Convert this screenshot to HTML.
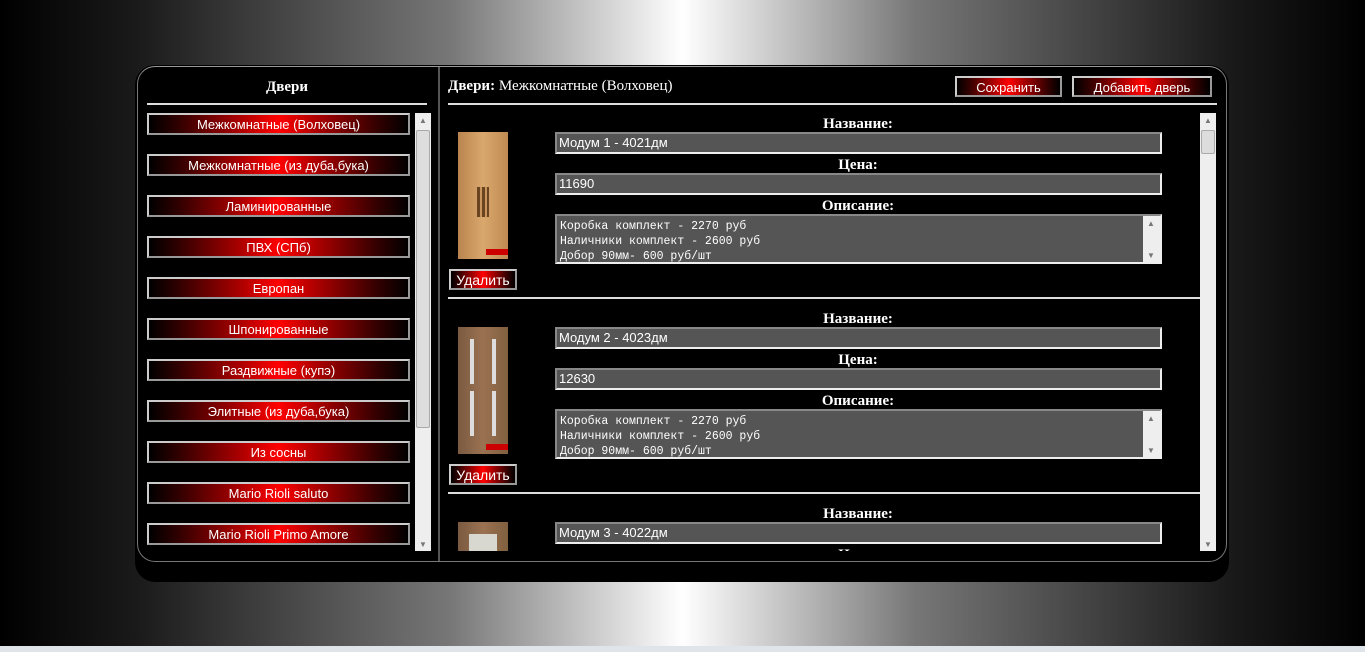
<!DOCTYPE html><html><head><meta charset="utf-8"><style>
*{margin:0;padding:0;box-sizing:border-box}
body{width:1365px;height:652px;overflow:hidden;position:relative;background:linear-gradient(90deg,#000 0%,#1a1a1a 10%,#777 33%,#fff 50%,#777 67%,#1a1a1a 90%,#000 100%);font-family:"Liberation Sans",sans-serif;color:#fff}
.abs{position:absolute}
#outer{left:135px;top:65px;width:1094px;height:517px;background:#000;border-radius:20px}
#inner{left:137px;top:66px;width:1090px;height:496px;border:1px solid #777;border-top-color:#999;border-radius:18px;background:#000}
.ser{font-family:"Liberation Serif",serif}
.hr{height:2px;background:#ddd}
.btn{background:linear-gradient(90deg,#000 0%,#300 12%,#a00 35%,#f00 50%,#a00 65%,#300 88%,#000 100%);border:2px solid #ccc;border-bottom-color:#999;border-right-color:#999;color:#fff;font-size:13px;text-align:center;line-height:19px}
.sb{background:#eee;width:16px}
.inp{background:#555;border:2px solid #eee;border-top-color:#888;border-left-color:#888;color:#fff;font-size:13px;padding-left:2px;line-height:18px}
.lbl{font-family:"Liberation Serif",serif;font-weight:bold;font-size:15px;width:606px;text-align:center;left:555px}
.ta{font-family:"Liberation Mono","DejaVu Sans Mono",monospace;font-size:11.5px;line-height:15px;padding:3px 3px;white-space:pre;overflow:hidden}
.tri{color:#777;font-size:8px;text-align:center;width:16px}
</style></head><body>
<div id="outer" class="abs"></div>
<div id="inner" class="abs"></div>
<div class="abs" style="left:438px;top:67px;width:2px;height:494px;background:#555"></div>
<div class="abs ser" style="left:147px;top:79px;width:280px;text-align:center;font-weight:bold;font-size:15px">Двери</div>
<div class="abs hr" style="left:147px;top:103px;width:280px"></div>
<div class="abs" style="left:147px;top:113px">
<div class="abs btn" style="top:0;width:263px;height:22px">Межкомнатные (Волховец)</div>
<div class="abs btn" style="top:41px;width:263px;height:22px">Межкомнатные (из дуба,бука)</div>
<div class="abs btn" style="top:82px;width:263px;height:22px">Ламинированные</div>
<div class="abs btn" style="top:123px;width:263px;height:22px">ПВХ (СПб)</div>
<div class="abs btn" style="top:164px;width:263px;height:22px">Европан</div>
<div class="abs btn" style="top:205px;width:263px;height:22px">Шпонированные</div>
<div class="abs btn" style="top:246px;width:263px;height:22px">Раздвижные (купэ)</div>
<div class="abs btn" style="top:287px;width:263px;height:22px">Элитные (из дуба,бука)</div>
<div class="abs btn" style="top:328px;width:263px;height:22px">Из сосны</div>
<div class="abs btn" style="top:369px;width:263px;height:22px">Mario Rioli saluto</div>
<div class="abs btn" style="top:410px;width:263px;height:22px">Mario Rioli Primo Amore</div>
</div>
<div class="abs sb" style="left:415px;top:113px;height:438px"></div>
<div class="abs" style="left:416px;top:130px;width:14px;height:298px;background:#ddd;border:1px solid #aaa;border-radius:2px"></div>
<div class="abs tri" style="left:415px;top:116px">▲</div><div class="abs tri" style="left:415px;top:540px">▼</div>

<div class="abs ser" style="left:448px;top:78px;font-size:15px"><b>Двери:</b> Межкомнатные (Волховец)</div>
<div class="abs btn" style="left:955px;top:76px;width:107px;height:21px">Сохранить</div>
<div class="abs btn" style="left:1072px;top:76px;width:140px;height:21px">Добавить дверь</div>
<div class="abs hr" style="left:448px;top:103px;width:769px"></div>

<div class="abs" style="left:440px;top:113px;width:760px;height:438px;overflow:hidden">
<div class="abs" style="left:-440px;top:-113px;width:1200px">
<div class="abs" style="left:458px;top:132px;width:50px;height:127px;background:linear-gradient(90deg,#b9844e,#d9a86d 50%,#c08a52)"><div class="abs" style="left:19px;top:55px;width:12px;height:30px;background:repeating-linear-gradient(90deg,#6a4420 0 3px,#c9955c 3px 5px)"></div><div class="abs" style="left:28px;top:117px;width:22px;height:6px;background:#c00"></div></div>
<div class="abs btn" style="left:449px;top:269px;width:68px;height:21px;font-size:14px">Удалить</div>
<div class="abs lbl" style="top:116px">Название:</div>
<div class="abs inp" style="left:555px;top:132px;width:607px;height:22px">Модум 1 - 4021дм</div>
<div class="abs lbl" style="top:157px">Цена:</div>
<div class="abs inp" style="left:555px;top:173px;width:607px;height:22px">11690</div>
<div class="abs lbl" style="top:198px">Описание:</div>
<div class="abs inp ta" style="left:555px;top:214px;width:607px;height:50px">Коробка комплект - 2270 руб
Наличники комплект - 2600 руб
Добор 90мм- 600 руб/шт</div>
<div class="abs sb" style="left:1143px;top:216px;height:46px;width:17px"></div>
<div class="abs tri" style="left:1143px;top:219px">▲</div><div class="abs tri" style="left:1143px;top:251px">▼</div>
<div class="abs hr" style="left:448px;top:297px;width:752px"></div>
<div class="abs" style="left:458px;top:327px;width:50px;height:127px;background:linear-gradient(90deg,#7a5a40,#9b7252 50%,#80603f)"><div class="abs" style="left:12px;top:12px;width:4px;height:45px;background:#ddd"></div><div class="abs" style="left:34px;top:12px;width:4px;height:45px;background:#ddd"></div><div class="abs" style="left:12px;top:64px;width:4px;height:45px;background:#ddd"></div><div class="abs" style="left:34px;top:64px;width:4px;height:45px;background:#ddd"></div><div class="abs" style="left:28px;top:117px;width:22px;height:6px;background:#c00"></div></div>
<div class="abs btn" style="left:449px;top:464px;width:68px;height:21px;font-size:14px">Удалить</div>
<div class="abs lbl" style="top:311px">Название:</div>
<div class="abs inp" style="left:555px;top:327px;width:607px;height:22px">Модум 2 - 4023дм</div>
<div class="abs lbl" style="top:352px">Цена:</div>
<div class="abs inp" style="left:555px;top:368px;width:607px;height:22px">12630</div>
<div class="abs lbl" style="top:393px">Описание:</div>
<div class="abs inp ta" style="left:555px;top:409px;width:607px;height:50px">Коробка комплект - 2270 руб
Наличники комплект - 2600 руб
Добор 90мм- 600 руб/шт</div>
<div class="abs sb" style="left:1143px;top:411px;height:46px;width:17px"></div>
<div class="abs tri" style="left:1143px;top:414px">▲</div><div class="abs tri" style="left:1143px;top:446px">▼</div>
<div class="abs hr" style="left:448px;top:492px;width:752px"></div>
<div class="abs" style="left:458px;top:522px;width:50px;height:127px;background:linear-gradient(90deg,#7a5a40,#9b7252 50%,#80603f)"><div class="abs" style="left:11px;top:12px;width:28px;height:40px;background:#d8d8d0"></div></div>
<div class="abs lbl" style="top:506px">Название:</div>
<div class="abs inp" style="left:555px;top:522px;width:607px;height:22px">Модум 3 - 4022дм</div>
<div class="abs lbl" style="top:547px">Цена:</div>
</div></div>
<div class="abs sb" style="left:1200px;top:113px;height:438px"></div>
<div class="abs" style="left:1201px;top:130px;width:14px;height:24px;background:#ddd;border:1px solid #aaa;border-radius:2px"></div>
<div class="abs tri" style="left:1200px;top:116px">▲</div><div class="abs tri" style="left:1200px;top:540px">▼</div>
<div class="abs" style="left:0;top:646px;width:1365px;height:6px;background:#dfe3ea"></div>
</body></html>
